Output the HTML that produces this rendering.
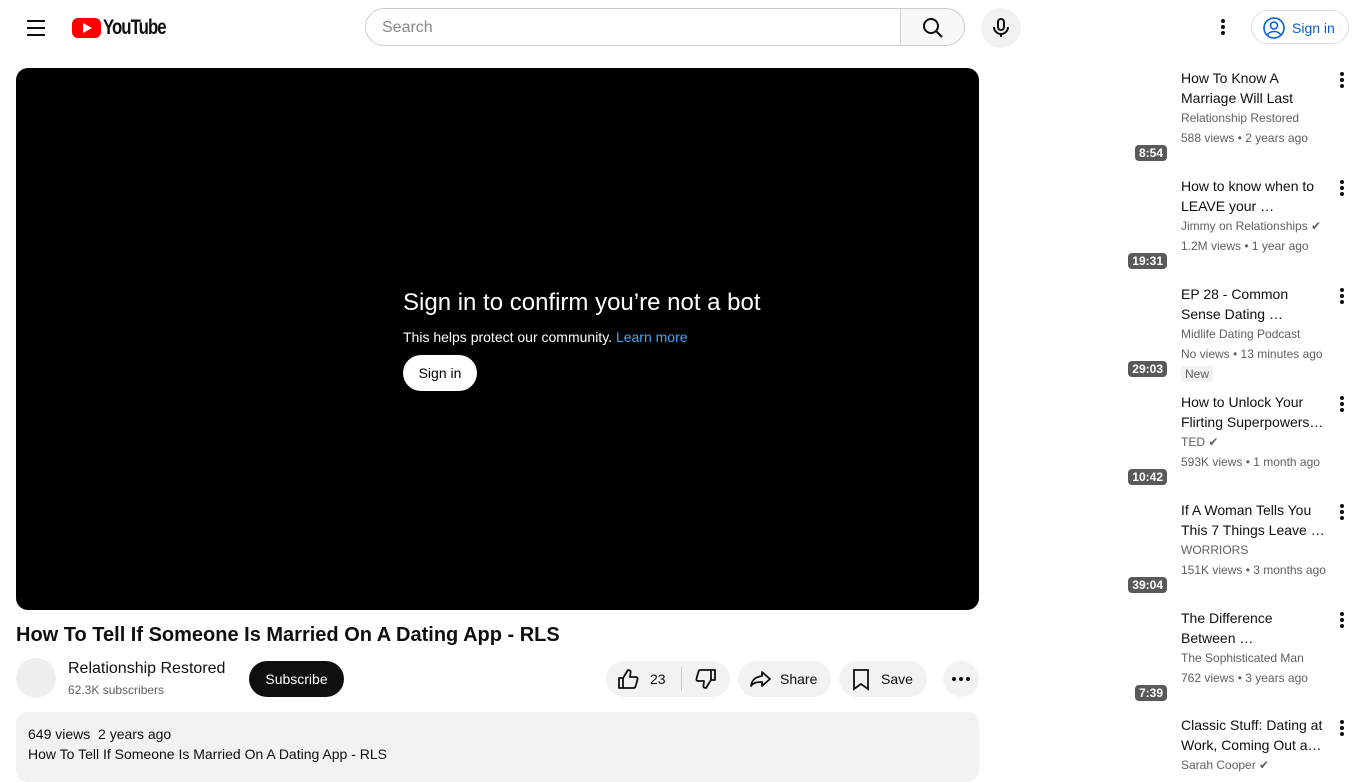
<!DOCTYPE html><html><head><style>
body{margin:0;width:1366px;height:768px;overflow:hidden;background:#fff;font-family:"Liberation Sans",Arial,sans-serif;position:relative}
.a{position:absolute}
.btn{background:#f2f2f2;border-radius:18px;height:36px;display:flex;align-items:center;font-size:14px;color:#0f0f0f}
.it .t{font-size:14px;color:#0f0f0f;line-height:20px;width:150px}
.it .m{font-size:12px;color:#606060;line-height:20px}
.dur{position:absolute;background:rgba(0,0,0,.65);color:#fff;font-size:12px;font-weight:bold;padding:1px 4px;border-radius:4px;right:199px}
.dots{position:absolute;left:1340px;width:4px}
.dots i{display:block;width:4px;height:4px;border-radius:2px;background:#0f0f0f;margin-bottom:2px}
</style></head><body>
<div class="a" style="left:27px;top:20px;width:18px"><div style="height:2px;background:#0f0f0f;margin-bottom:5px"></div><div style="height:2px;background:#0f0f0f;margin-bottom:5px"></div><div style="height:2px;background:#0f0f0f"></div></div>
<div class="a" style="left:72px;top:18px;width:29px;height:20px;background:#f00;border-radius:6px"><div style="position:absolute;left:11px;top:5px;border-left:9px solid #fff;border-top:5px solid transparent;border-bottom:5px solid transparent"></div></div>
<div class="a" style="left:103px;top:16px;font-size:21px;font-weight:bold;letter-spacing:-1.2px;color:#0f0f0f;transform:scaleX(.8);transform-origin:left">YouTube</div>
<div class="a" style="left:365px;top:8px;width:536px;height:38px;border:1px solid #ccc;border-radius:20px 0 0 20px;box-sizing:border-box"><span style="position:absolute;left:16px;top:10px;font-size:16px;color:#888">Search</span></div>
<div class="a" style="left:901px;top:8px;width:64px;height:38px;background:#f8f8f8;border:1px solid #ccc;border-left:none;border-radius:0 20px 20px 0;box-sizing:border-box"><svg style="position:absolute;left:20px;top:7px" width="24" height="24" viewBox="0 0 24 24"><circle cx="10" cy="10" r="7" fill="none" stroke="#0f0f0f" stroke-width="2"/><path d="M15 15l6 6" stroke="#0f0f0f" stroke-width="2"/></svg></div>
<div class="a" style="left:981px;top:8px;width:40px;height:40px;background:#f2f2f2;border-radius:50%"><svg style="position:absolute;left:8px;top:8px" width="24" height="24" viewBox="0 0 24 24"><rect x="9" y="3" width="6" height="11" rx="3" fill="none" stroke="#0f0f0f" stroke-width="2"/><path d="M5 11a7 7 0 0014 0M12 18v3" fill="none" stroke="#0f0f0f" stroke-width="2"/></svg></div>
<div class="dots" style="left:1221px;top:19px"><i></i><i></i><i></i></div>
<div class="a" style="left:1251px;top:10px;width:98px;height:34px;border:1px solid #ddd;border-radius:18px;box-sizing:border-box;color:#065fd4;font-size:14px"><svg style="position:absolute;left:10px;top:5px" width="24" height="24" viewBox="0 0 24 24"><circle cx="12" cy="12" r="10" fill="none" stroke="#065fd4" stroke-width="1.6"/><circle cx="12" cy="9.5" r="3.5" fill="none" stroke="#065fd4" stroke-width="1.6"/><path d="M5.5 18.5c3-4 10-4 13 0" fill="none" stroke="#065fd4" stroke-width="1.6"/></svg><span style="position:absolute;left:40px;top:9px">Sign in</span></div>
<div class="a" style="left:16px;top:68px;width:963px;height:542px;background:#000;border-radius:12px"></div>
<div class="a" style="left:403px;top:289px;color:#fff;font-size:24px">Sign in to confirm you’re not a bot</div>
<div class="a" style="left:403px;top:329px;color:#fff;font-size:14px">This helps protect our community. <span style="color:#3ea6ff">Learn more</span></div>
<div class="a" style="left:403px;top:355px;width:74px;height:36px;background:#fff;border-radius:18px;font-size:14px;text-align:center;line-height:36px">Sign in</div>
<div class="a" style="left:16px;top:624px;font-size:20px;font-weight:bold;color:#0f0f0f">How To Tell If Someone Is Married On A Dating App - RLS</div>
<div class="a" style="left:16px;top:658px;width:40px;height:40px;border-radius:50%;background:#eee"></div>
<div class="a" style="left:68px;top:660px;font-size:16px;color:#0f0f0f">Relationship Restored</div>
<div class="a" style="left:68px;top:683px;font-size:12px;color:#606060">62.3K subscribers</div>
<div class="a" style="left:249px;top:661px;width:95px;height:36px;background:#0f0f0f;border-radius:18px;color:#fff;font-size:14px;text-align:center;line-height:36px">Subscribe</div>
<div class="a btn" style="left:606px;top:661px;width:124px"><svg style="margin-left:10px" width="24" height="24" viewBox="0 0 24 24"><path d="M3 11h4v10H3zM7 11l5-8c2 0 3 1 2.5 3L14 10h6c1 0 2 1 1.5 2.5l-2 7c-.3 1-1 1.5-2 1.5H7" fill="none" stroke="#0f0f0f" stroke-width="1.8" stroke-linejoin="round"/></svg><span style="margin-left:10px">23</span><span style="width:1px;height:24px;background:#ccc;margin-left:15px"></span><svg style="margin-left:12px" width="24" height="24" viewBox="0 0 24 24"><path d="M17 3h4v10h-4zM17 13l-5 8c-2 0-3-1-2.5-3l.5-4H4c-1 0-2-1-1.5-2.5l2-7C4.8 3.5 5.5 3 6.5 3H17" fill="none" stroke="#0f0f0f" stroke-width="1.8" stroke-linejoin="round"/></svg></div>
<div class="a btn" style="left:738px;top:661px;width:93px"><svg style="margin-left:10px" width="24" height="24" viewBox="0 0 24 24"><path d="M14 5l8 7-8 7v-4c-6 0-9 1-11 4 1-6 4-9 11-10z" fill="none" stroke="#0f0f0f" stroke-width="1.8" stroke-linejoin="round"/></svg><span style="margin-left:8px">Share</span></div>
<div class="a btn" style="left:839px;top:661px;width:88px"><svg style="margin-left:10px" width="24" height="24" viewBox="0 0 24 24"><path d="M5 3h14v19l-7-5-7 5z" fill="none" stroke="#0f0f0f" stroke-width="1.8"/></svg><span style="margin-left:8px">Save</span></div>
<div class="a btn" style="left:943px;top:661px;width:36px;justify-content:center;gap:3px"><i style="width:4px;height:4px;border-radius:2px;background:#0f0f0f"></i><i style="width:4px;height:4px;border-radius:2px;background:#0f0f0f"></i><i style="width:4px;height:4px;border-radius:2px;background:#0f0f0f"></i></div>
<div class="a" style="left:16px;top:712px;width:963px;height:70px;background:#f2f2f2;border-radius:12px"></div>
<div class="a" style="left:28px;top:726px;font-size:14px;color:#0f0f0f">649 views&nbsp;&nbsp;2 years ago</div>
<div class="a" style="left:28px;top:746px;font-size:14px;color:#0f0f0f">How To Tell If Someone Is Married On A Dating App - RLS</div>

<div class="a it" style="left:1181px;top:68px"><div class="t">How To Know A<br>Marriage Will Last</div><div class="m">Relationship Restored<br>588 views • 2 years ago</div></div>
<div class="dur" style="top:145px">8:54</div><div class="dots" style="top:72px"><i></i><i></i><i></i></div>
<div class="a it" style="left:1181px;top:176px"><div class="t">How to know when to<br>LEAVE your …</div><div class="m">Jimmy on Relationships ✔<br>1.2M views • 1 year ago</div></div>
<div class="dur" style="top:253px">19:31</div><div class="dots" style="top:180px"><i></i><i></i><i></i></div>
<div class="a it" style="left:1181px;top:284px"><div class="t">EP 28 - Common<br>Sense Dating …</div><div class="m">Midlife Dating Podcast<br>No views • 13 minutes ago</div><div style="display:inline-block;background:#f2f2f2;font-size:12px;color:#606060;padding:1px 4px;margin-top:2px">New</div></div>
<div class="dur" style="top:361px">29:03</div><div class="dots" style="top:288px"><i></i><i></i><i></i></div>
<div class="a it" style="left:1181px;top:392px"><div class="t">How to Unlock Your<br>Flirting Superpowers…</div><div class="m">TED ✔<br>593K views • 1 month ago</div></div>
<div class="dur" style="top:469px">10:42</div><div class="dots" style="top:396px"><i></i><i></i><i></i></div>
<div class="a it" style="left:1181px;top:500px"><div class="t">If A Woman Tells You<br>This 7 Things Leave …</div><div class="m">WORRIORS<br>151K views • 3 months ago</div></div>
<div class="dur" style="top:577px">39:04</div><div class="dots" style="top:504px"><i></i><i></i><i></i></div>
<div class="a it" style="left:1181px;top:608px"><div class="t">The Difference<br>Between …</div><div class="m">The Sophisticated Man<br>762 views • 3 years ago</div></div>
<div class="dur" style="top:685px">7:39</div><div class="dots" style="top:612px"><i></i><i></i><i></i></div>
<div class="a it" style="left:1181px;top:715px"><div class="t">Classic Stuff: Dating at<br>Work, Coming Out a…</div><div class="m">Sarah Cooper ✔</div></div>
<div class="dots" style="top:720px"><i></i><i></i><i></i></div>
</body></html>
